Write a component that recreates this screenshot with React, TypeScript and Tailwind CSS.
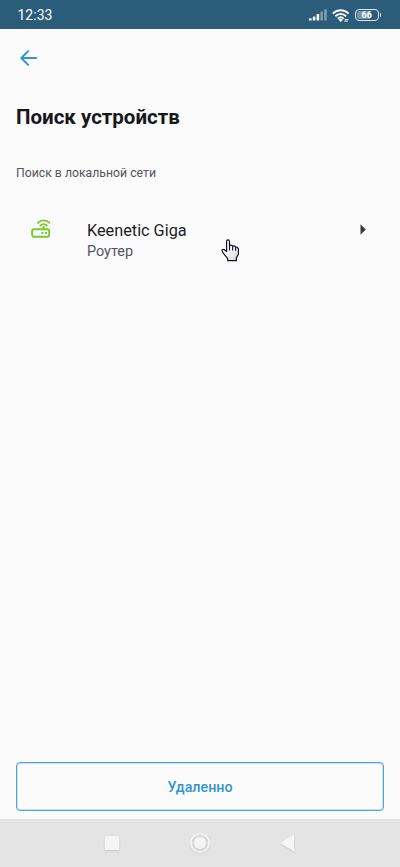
import type { SVGProps } from 'react';

type Device = {
  id: string;
  name: string;
  kind: string;
};

const devices: Device[] = [{ id: 'giga', name: 'Keenetic Giga', kind: 'Роутер' }];

function SignalIcon() {
  return (
    <svg width="18" height="12" viewBox="0 0 18 12" fill="#fff">
      <rect x="0" y="9.2" width="2.6" height="2.3" rx="0.6" />
      <rect x="3.8" y="7.4" width="2.6" height="4.1" rx="0.6" />
      <rect x="7.6" y="5" width="2.6" height="6.5" rx="0.6" />
      <rect x="11.4" y="2.6" width="2.6" height="8.9" rx="0.6" opacity="0.4" />
      <rect x="15.2" y="0.3" width="2.6" height="11.2" rx="0.6" opacity="0.4" />
    </svg>
  );
}

function WifiIcon() {
  return (
    <svg width="18" height="14" viewBox="0 0 18 14" fill="none" stroke="#fff" strokeWidth="1.9" className="mt-px">
      <path d="M0.8 4.6C5.4 0.2 12 0.2 16.6 4.6" />
      <path d="M3.3 7.2C6.6 4.1 10.8 4.1 14.1 7.2" />
      <path d="M5.7 9.6C7.6 7.9 9.8 7.9 11.7 9.6" />
      <path d="M6.4 10.6Q8.7 8.8 11 10.6L8.7 13Z" fill="#fff" stroke="none" />
      <path d="M12.6 10.6h3.8M12.2 12.2h3.6" strokeWidth="1.1" opacity="0.8" />
    </svg>
  );
}

function BatteryIcon() {
  return (
    <div className="flex items-center gap-px">
      <div className="flex h-3 w-6 items-center justify-center rounded-[4px] border border-[#dce6ec] p-px">
        <div className="flex h-full w-full items-center rounded-[2px] bg-[linear-gradient(90deg,#7795a7_66%,transparent_66%)] pl-[5px] text-[9px] leading-none font-bold text-white">
          66
        </div>
      </div>
      <div className="h-1 w-[1.5px] rounded-r-sm bg-[#dce6ec]" />
    </div>
  );
}

function RouterIcon(props: SVGProps<SVGSVGElement>) {
  return (
    <svg width="20" height="20" viewBox="0 0 20 20" fill="none" stroke="#7ac931" strokeWidth="1.9" {...props}>
      <rect x="1.1" y="10.2" width="17.1" height="7.6" rx="2" />
      <path d="M12.6 10V7" />
      <path d="M9.4 6.5C11.2 4.7 14 4.7 15.8 6.5" strokeLinecap="round" />
      <path d="M6.8 3.8C10 0.6 15.2 0.6 18.4 3.8" strokeLinecap="round" />
      <circle cx="11.3" cy="14" r="1.15" fill="#7ac931" stroke="none" />
      <circle cx="15" cy="14" r="1.15" fill="#7ac931" stroke="none" />
    </svg>
  );
}

function HandCursor() {
  return (
    <svg width="19" height="23" viewBox="0 0 19 23" className="absolute top-[20px] left-[221px]">
      <defs>
        <linearGradient id="hand" x1="0" y1="0" x2="1" y2="1">
          <stop offset="0.4" stopColor="#fff" />
          <stop offset="1" stopColor="#d0d0d6" />
        </linearGradient>
      </defs>
      <path
        d="M5.6 12.5V2.2Q5.6 0.8 7 0.8T8.5 2.2V7.2Q8.7 6.1 10 6.2T11.6 7.5Q12 6.7 13.1 6.9T14.6 8.4Q15 7.8 16 8.2T17.4 10V15.2L15.4 18.8V21.7H6.7V19.7L2.3 14.2L1 11.6Q0.9 10.2 2.3 10.3Q3.3 10.3 4.3 11.5Z"
        fill="url(#hand)"
        stroke="#111126"
        strokeWidth="1.2"
        strokeLinejoin="round"
      />
      <path d="M8.5 7v4.4M11.6 7.6v4M14.6 8.4v3.4" stroke="#111126" strokeWidth="1.1" />
    </svg>
  );
}

function StatusBar() {
  return (
    <div className="flex h-[29px] shrink-0 items-center justify-between bg-[#2b5c7a] pt-px pr-[19px] pl-[17.5px] text-white">
      <span className="text-[14px]">12:33</span>
      <div className="flex items-center gap-[5px]">
        <SignalIcon />
        <WifiIcon />
        <BatteryIcon />
      </div>
    </div>
  );
}

function DeviceRow({ device }: { device: Device }) {
  return (
    <button className="relative flex h-[62px] w-full items-start text-left">
      <RouterIcon className="ml-[31px]" />
      <span className="ml-9 flex flex-1 flex-col">
        <span className="pt-px text-[16.25px] leading-[22px] text-[#1c1c1f]">{device.name}</span>
        <span className="text-[14.4px] leading-[19px] text-[#55555b]">{device.kind}</span>
      </span>
      <svg width="6" height="11" viewBox="0 0 6 11" className="mt-[5px] mr-[34px]">
        <path d="M0.5 0.3L5.8 5.5L0.5 10.7Z" fill="#3a3a40" />
      </svg>
      <HandCursor />
    </button>
  );
}

function NavBar() {
  return (
    <div className="flex h-12 shrink-0 items-center bg-[#e4e4e4]">
      <svg width="400" height="48" viewBox="0 0 400 48" fill="#f5f5f5" className="drop-shadow-[0_1px_1px_rgba(0,0,0,0.12)]">
        <rect x="105" y="17" width="14" height="14" rx="1.5" />
        <circle cx="200" cy="24" r="9.2" fill="none" stroke="#f5f5f5" strokeWidth="1.6" />
        <circle cx="200" cy="24" r="6" />
        <path d="M280.5 24L294 15.5V32.5Z" />
      </svg>
    </div>
  );
}

export default function App() {
  return (
    <div className="flex h-screen w-full flex-col overflow-hidden bg-[#fbfbfb] font-['Roboto',sans-serif]">
      <StatusBar />
      <main className="flex flex-1 flex-col">
        <button className="mt-[21px] ml-[20px] w-fit">
          <svg width="18" height="16" viewBox="0 0 18 16" fill="none" stroke="#3294d2" strokeWidth="1.9" strokeLinecap="round" strokeLinejoin="round">
            <path d="M16.2 8H1.4M8.2 1.1L1.3 8L8.2 14.9" />
          </svg>
        </button>
        <h1 className="mt-[37px] ml-4 text-[20.5px] leading-7 font-bold text-[#17171c]">Поиск устройств</h1>
        <p className="mt-[32px] ml-4 text-[12.25px] leading-5 text-[#55555b]">Поиск в локальной сети</p>
        <div className="mt-9">
          {devices.map((device) => (
            <DeviceRow key={device.id} device={device} />
          ))}
        </div>
        <button className="mx-4 mt-auto mb-2 h-[49px] rounded-[4px] border border-[#4ba6dc] pt-[2px] text-[14.25px] font-medium text-[#3294d2] shadow-[inset_0_0_0_1px_rgba(75,166,220,0.3)]">
          Удаленно
        </button>
      </main>
      <NavBar />
    </div>
  );
}
